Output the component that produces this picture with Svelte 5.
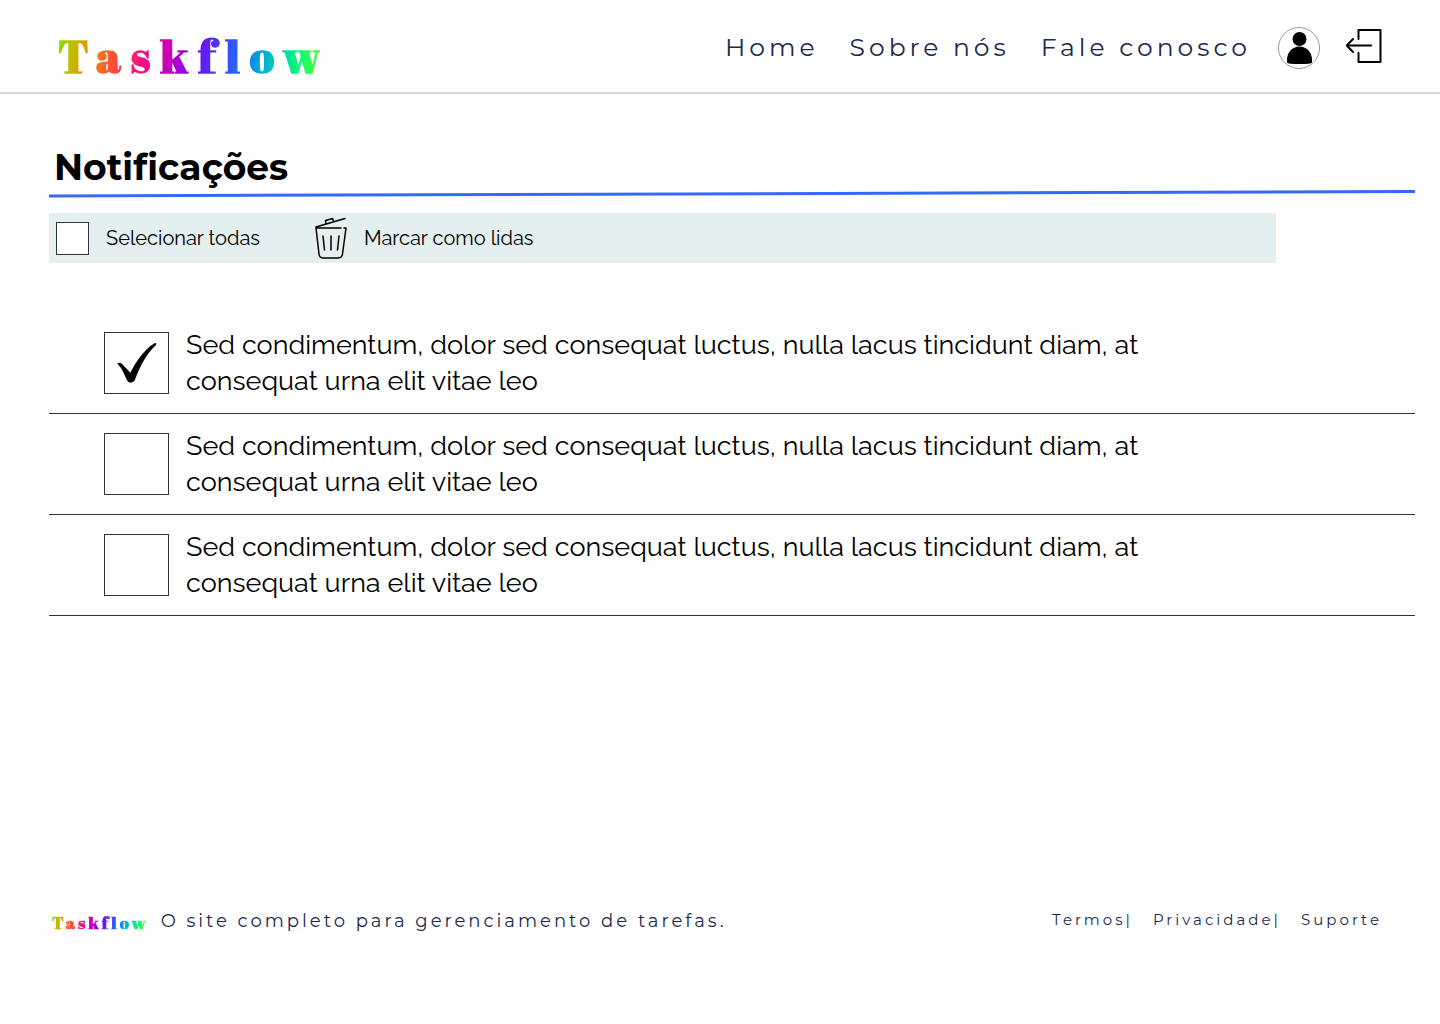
<script>
  let items = $state([
    { id: 1, read: true },
    { id: 2, read: false },
    { id: 3, read: false },
  ]);
  const message =
    'Sed condimentum, dolor sed consequat luctus, nulla lacus tincidunt diam, at consequat urna elit vitae leo';
  let all = $derived(items.every((item) => item.read));

  function setAll(value) {
    for (const item of items) item.read = value;
  }
</script>

<div class="page">
  <header class="header">
    <a class="logo" href="#home">Taskflow</a>
    <nav class="nav">
      <a href="#home">Home</a>
      <a href="#sobre">Sobre nós</a>
      <a href="#contato">Fale conosco</a>
    </nav>
    <button class="icon-button" aria-label="Perfil">
      <svg width="42" height="42" viewBox="0 0 42 42">
        <circle cx="21" cy="21" r="20.5" fill="#fff" stroke="#999" />
        <circle cx="21.500" cy="12" r="7" />
        <path d="M9 35.500C8 26 14 19.500 21.500 19.500S35 26 34 35.500Q33.500 37 21.500 37T9 35.500Z" />
      </svg>
    </button>
    <button class="icon-button" aria-label="Sair">
      <svg class="line-icon" width="38" height="42" viewBox="0 0 38 42" stroke-width="2">
        <path d="M12.500 12V3H34.500V35H12.500V26M25 18.500H1M7 12L0.800 18.500L7 25" />
      </svg>
    </button>
  </header>

  <main class="main">
    <h1>Notificações</h1>
    <svg class="rule" viewBox="0 0 1366 8" preserveAspectRatio="none" aria-hidden="true">
      <path d="M0 6L1366 1.500" />
    </svg>

    <div class="toolbar">
      <label class="select-all">
        <input
          class="box small"
          type="checkbox"
          checked={all}
          onchange={(event) => setAll(event.currentTarget.checked)}
        />
        Selecionar todas
      </label>
      <button class="mark" onclick={() => setAll(true)}>
        <svg class="line-icon" width="34" height="44" viewBox="0 0 34 44" stroke-width="1.500" aria-hidden="true">
          <path d="M2 11L31 2.500M12 8L11.500 4.500L18.500 2.500L19.500 5.500M27 12H2L5 38Q5.500 42 9 42H24Q28 42 28.500 38L32 12H30M9 20L10.500 34M17 20V34M25 20L23.500 34" />
        </svg>
        Marcar como lidas
      </button>
    </div>

    <ul class="list">
      {#each items as item (item.id)}
        <li>
          <label class="row">
            <span class="check">
              <input class="box" type="checkbox" bind:checked={item.read} />
              {#if item.read}
                <svg class="tick" viewBox="0 0 64 62" aria-hidden="true">
                  <path d="M13 31C15 29 18 31 20 34L26 40C32 28 40 17 49 11.500C51 10 52.500 11.500 51 13C43 20 36 32 30.500 47C29 50 25 51 23 48C20 42 18 36 13 31Z" />
                </svg>
              {/if}
            </span>
            <span class="message">{message}</span>
          </label>
        </li>
      {/each}
    </ul>
  </main>

  <footer class="footer">
    <a class="logo tiny" href="#home">Taskflow</a>
    <p>O site completo para gerenciamento de tarefas.</p>
    <nav class="legal">
      <span><a href="#termos">Termos</a>|</span>
      <span><a href="#privacidade">Privacidade</a>|</span>
      <a href="#suporte">Suporte</a>
    </nav>
  </footer>
</div>

<style>
  :global(body) {
    background: #fff;
  }

  .page {
    display: flex;
    flex-direction: column;
    min-height: 100vh;
    box-sizing: border-box;
    padding-bottom: 87px;
    color: #000;
    font-family: Raleway, Lato, sans-serif;
  }

  a {
    color: inherit;
    text-decoration: none;
  }

  button {
    padding: 0;
    border: 0;
    background: none;
    color: inherit;
    font: inherit;
    cursor: pointer;
  }

  svg {
    display: block;
  }

  .header {
    display: flex;
    align-items: center;
    box-sizing: border-box;
    height: 94px;
    padding: 4px 56px 0 58px;
    border-bottom: 2px solid #d9d9d9;
  }

  .logo {
    background: linear-gradient(
      100deg,
      #70e800 0%,
      #c8b800 8%,
      #e8900c 14%,
      #ff4a38 23%,
      #f81080 32%,
      #d800a8 39%,
      #b000d0 45%,
      #7010f0 52%,
      #4040ff 60%,
      #2070f8 68%,
      #00a8d8 74%,
      #00e0a0 83%,
      #20ff60 90%,
      #70ff20 100%
    );
    background-clip: text;
    color: transparent;
    font: 900 45px/56px "Abril Fatface", "Playfair Display", "DejaVu Serif", serif;
    letter-spacing: 10px;
    padding-top: 16px;
  }

  .nav {
    display: flex;
    gap: 31px;
    margin-left: auto;
    padding: 0 1px 2px 0;
    color: #1d2851;
    font: 25px/32px Montserrat, Inter, sans-serif;
    letter-spacing: 4px;
  }

  .icon-button {
    margin-left: 26px;
  }

  .line-icon {
    fill: none;
    stroke: #000;
    stroke-linecap: round;
    stroke-linejoin: round;
  }

  .main {
    padding: 50px 25px 0 49px;
  }

  h1 {
    margin: 0 0 0 5px;
    font: bold 36px/46px Montserrat, Inter, sans-serif;
    font-variant-ligatures: none;
  }

  .rule {
    width: 100%;
    height: 8px;
    fill: none;
    stroke: #3468f6;
    stroke-width: 3px;
  }

  .toolbar {
    display: flex;
    align-items: center;
    gap: 54px;
    box-sizing: border-box;
    height: 50px;
    margin: 15px 139px 0 0;
    padding: 0 7px;
    background: #e4eff0;
    font-size: 20px;
  }

  .select-all,
  .mark {
    display: flex;
    align-items: center;
    gap: 16px;
  }

  .select-all {
    gap: 17px;
  }

  .box {
    appearance: none;
    display: block;
    box-sizing: border-box;
    width: 65px;
    height: 62px;
    margin: 0;
    border: 1px solid #333;
    background: #fff;
  }

  .small {
    width: 33px;
    height: 33px;
  }

  .small:checked {
    background: #333;
    box-shadow: inset 0 0 0 6px #fff;
  }

  .list {
    margin: 50px 0 0;
    padding: 0;
    list-style: none;
  }

  .row {
    display: flex;
    align-items: center;
    gap: 17px;
    box-sizing: border-box;
    min-height: 101px;
    padding-left: 55px;
    border-bottom: 1px solid #333;
  }

  .check {
    position: relative;
    flex: none;
  }

  .tick {
    position: absolute;
    inset: 0;
    pointer-events: none;
  }

  .message {
    max-width: 960px;
    font-size: 27px;
    line-height: 36px;
  }

  .footer {
    display: flex;
    align-items: center;
    margin-top: auto;
    padding: 0 58px 0 52px;
    color: #1d2851;
    font: 18px/30px Montserrat, Inter, sans-serif;
    letter-spacing: 3px;
  }

  .tiny {
    padding: 4px 0 0;
    font-size: 17px;
    line-height: 24px;
    letter-spacing: 3px;
  }

  .footer p {
    margin: 0 0 0 12px;
  }

  .legal {
    display: flex;
    gap: 20px;
    margin-left: auto;
    padding-bottom: 2px;
    font-size: 15px;
  }
</style>
